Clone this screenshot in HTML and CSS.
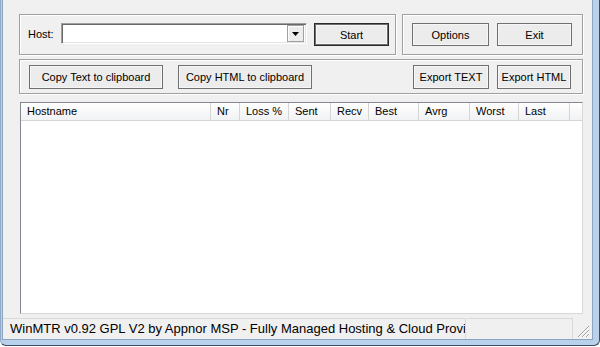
FILE: index.html
```html
<!DOCTYPE html>
<html lang="en">
<head>
    <meta charset="UTF-8">
    <title>WinMTR</title>
    <link rel="stylesheet" href="styles.css">
</head>
<body>
    <div class="window">
        <div class="client">
            <div class="top-row">
                <div class="group host-group">
                    <span class="label">Host:</span>
                    <div class="combo">
                        <div class="combo-field"></div>
                        <div class="combo-btn">
                            <svg width="7" height="4" viewBox="0 0 7 4"><path d="M0 0h7L3.5 4z" fill="#000"/></svg>
                        </div>
                    </div>
                    <button class="btn btn-default start">Start</button>
                </div>
                <div class="group action-group">
                    <button class="btn options">Options</button>
                    <button class="btn exit">Exit</button>
                </div>
            </div>
            <div class="group export-group">
                <button class="btn copy-text">Copy Text to clipboard</button>
                <button class="btn copy-html">Copy HTML to clipboard</button>
                <span class="spacer"></span>
                <button class="btn export-text">Export TEXT</button>
                <button class="btn export-html">Export HTML</button>
            </div>
            <div class="list">
                <div class="list-head">
                    <div class="col col-host">Hostname</div>
                    <div class="col col-nr">Nr</div>
                    <div class="col col-loss">Loss %</div>
                    <div class="col col-sent">Sent</div>
                    <div class="col col-recv">Recv</div>
                    <div class="col col-best">Best</div>
                    <div class="col col-avrg">Avrg</div>
                    <div class="col col-worst">Worst</div>
                    <div class="col col-last">Last</div>
                    <div class="col col-fill"></div>
                </div>
                <div class="list-body"></div>
            </div>
            <div class="status">
                <div class="status-main">WinMTR v0.92 GPL V2 by Appnor MSP - Fully Managed Hosting &amp; Cloud Provi</div>
                <div class="status-side"></div>
                <div class="grip">
                    <svg width="13" height="13" viewBox="0 0 13 13">
                        <path d="M12 2L2 12M12 6L6 12M12 10L10 12" stroke="#fff" stroke-width="1"/>
                        <path d="M12 1L1 12M12 5L5 12M12 9L9 12" stroke="#a0a0a0" stroke-width="1"/>
                    </svg>
                </div>
            </div>
        </div>
    </div>
</body>
</html>
```

FILE: styles.css
```css
body {
    margin: 0;
    padding: 0;
    background: #fff;
    font-family: "Liberation Sans", Arial, sans-serif;
    font-size: 11px;
    color: #000;
}
.window {
    width: 600px;
    height: 346px;
    box-sizing: border-box;
    background: #b9d1ea;
    border-right: 1px solid #3d4b5c;
    border-bottom: 1px solid #3d4b5c;
    border-left: 1px solid #8fa9c6;
    border-radius: 0 0 6px 6px;
    padding: 0 6px 5px 1px;
}
.client {
    height: 340px;
    box-sizing: border-box;
    background: #f0f0f0;
    border: 1px solid #8ea4bc;
    border-top: none;
    padding: 14px 0 0 16px;
    display: flex;
    flex-direction: column;
}
.top-row {
    display: flex;
    gap: 6px;
    height: 41px;
}
.group {
    box-sizing: border-box;
    border: 1px solid #a0a0a0;
    box-shadow: inset 1px 1px 0 #fff, 1px 1px 0 #fff;
    display: flex;
    align-items: center;
}
.host-group {
    width: 377px;
    padding-left: 8px;
}
.action-group {
    width: 181px;
    padding-left: 9px;
    gap: 8px;
}
.label {
    width: 33px;
    margin-top: -1px;
}
.combo {
    width: 246px;
    height: 21px;
    box-sizing: border-box;
    border: 1px solid;
    border-color: #a0a0a0 #fff #fff #a0a0a0;
    box-shadow: inset 1px 1px 0 #696969, inset -1px -1px 0 #e3e3e3;
    background: #fff;
    display: flex;
    padding: 1px 2px 1px 2px;
    margin-top: -2px;
}
.combo-field {
    flex: 1;
}
.combo-btn {
    width: 17px;
    box-sizing: border-box;
    border: 1px solid #a0a0a0;
    background: #ececec;
    box-shadow: inset 1px 1px 0 #fff;
    display: flex;
    align-items: center;
    justify-content: center;
}
.btn {
    font-family: "Liberation Sans", Arial, sans-serif;
    font-size: 11px;
    color: #000;
    height: 23px;
    box-sizing: border-box;
    padding: 0;
    margin: 0;
    border: 1px solid #707070;
    background: #ececec;
    box-shadow: inset 0 0 0 1px #f6f6f6;
}
.btn-default {
    border-color: #2b2b2b;
    box-shadow: inset 0 0 0 1px #6e6e6e, inset 0 0 0 2px #f6f6f6;
}
.start {
    width: 75px;
    margin-left: 7px;
}
.options {
    width: 77px;
}
.exit {
    width: 75px;
}
.export-group {
    margin-top: 4px;
    height: 35px;
    width: 564px;
    padding-left: 9px;
}
.export-group .btn {
    height: 24px;
    margin-top: 1px;
}
.copy-text {
    width: 134px;
}
.copy-html {
    width: 134px;
    margin-left: 15px;
}
.spacer {
    flex: 1;
}
.export-text {
    width: 76px;
}
.export-html {
    width: 74px;
    margin-left: 8px;
    margin-right: 11px;
}
.list {
    margin: 8px 0 0 1px;
    width: 563px;
    height: 212px;
    box-sizing: border-box;
    border: 1px solid;
    border-color: #828790 #d8d8d8 #d8d8d8 #828790;
    background: #fff;
    display: flex;
    flex-direction: column;
}
.list-head {
    display: flex;
    height: 17px;
    background: linear-gradient(#fff, #f1f2f4);
    border-bottom: 1px solid #d5d5d5;
}
.col {
    box-sizing: border-box;
    border-right: 1px solid #d5d5d5;
    padding-left: 6px;
    line-height: 17px;
    white-space: nowrap;
}
.col-host { width: 190px; }
.col-nr { width: 29px; }
.col-loss { width: 49px; }
.col-sent { width: 42px; }
.col-recv { width: 38px; }
.col-best { width: 50px; }
.col-avrg { width: 51px; }
.col-worst { width: 49px; }
.col-last { width: 51px; }
.col-fill {
    flex: 1;
    border-right: none;
}
.list-body {
    flex: 1;
}
.status {
    margin: 4px 0 0 -16px;
    height: 21px;
    display: flex;
}
.status-main {
    width: 463px;
    box-sizing: border-box;
    border-top: 1px solid #d9d9d9;
    border-right: 1px solid #d9d9d9;
    padding-left: 7px;
    font-family: "Liberation Sans", Tahoma, sans-serif;
    font-size: 13px;
    line-height: 20px;
    white-space: nowrap;
    overflow: hidden;
}
.status-side {
    width: 106px;
    box-sizing: border-box;
    border-top: 1px solid #d9d9d9;
    border-right: 1px solid #d9d9d9;
    margin-left: 1px;
}
.grip {
    flex: 1;
    display: flex;
    align-items: flex-end;
    justify-content: flex-end;
    padding: 0 2px 1px 0;
}
```
